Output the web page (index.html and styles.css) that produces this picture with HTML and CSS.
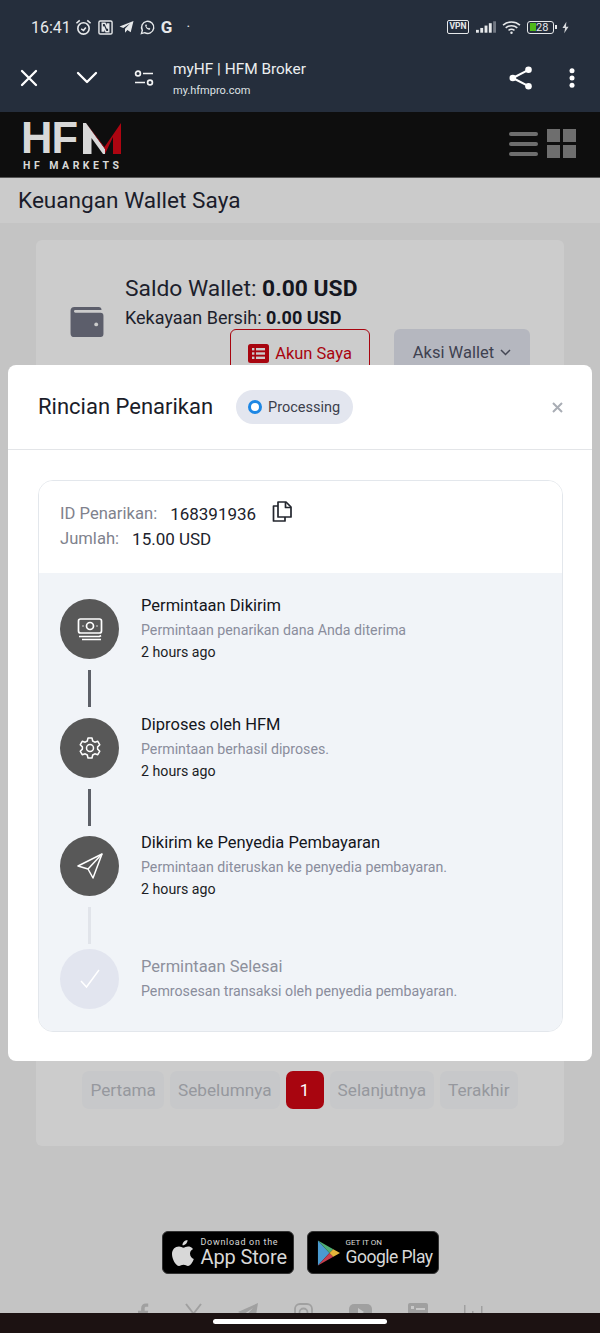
FILE: index.html
```html
<!DOCTYPE html>
<html lang="id">
<head>
<meta charset="utf-8">
<title>myHF | HFM Broker</title>
<link rel="stylesheet" href="styles.css">
</head>
<body>
<div class="phone">
  <header class="chrome">
    <div class="status">
      <div class="status-left">
        <span class="clock">16:41</span>
        <svg class="si" width="17" height="17" viewBox="0 0 18 18" fill="none" stroke="#e6e8ea" stroke-width="1.700"><circle cx="9" cy="10" r="6"/><path d="M6.500 10.500 9 12l2.500-3M1.500 4.500 5 1.500M16.500 4.500 13 1.500"/></svg>
        <svg class="si" width="15" height="15" viewBox="0 0 16 16" fill="none" stroke="#e6e8ea" stroke-width="1.500"><rect x="1" y="1" width="14" height="14" rx="1.500"/><path d="M4.500 12.500V3.500h3L10 9V3.500M11.500 3.500v9h-3L6 7v5.500"/></svg>
        <svg class="si" width="15" height="14" viewBox="0 0 15 14"><path d="M14.500 1 .5 6.500l3.800 1.500L11 3.500 6 8.700v4l2.400-2.700 3.300 2.300z" fill="#e6e8ea"/></svg>
        <svg class="si" width="15" height="15" viewBox="0 0 16 16" fill="none" stroke="#e6e8ea" stroke-width="1.500"><path d="M1.500 14.500l1-3.500a6.500 6.500 0 1 1 2.500 2.500z"/><path d="M5.500 5c0 3 2.500 5.500 5 5.500l.5-1.500-1.500-.8-.7.600c-1-.5-1.600-1.200-2-2l.6-.7L7 4.700z" fill="#e6e8ea" stroke="none"/></svg>
        <span class="gletter">G</span>
        <span class="dot-sep">·</span>
      </div>
      <div class="status-right">
        <span class="vpn">VPN</span>
        <svg width="20" height="14" viewBox="0 0 21 14"><g fill="#e6e8ea"><rect x="0" y="10" width="3" height="3"/><rect x="4.500" y="8" width="3" height="5"/><rect x="9" y="5.500" width="3" height="7.500"/><rect x="13.500" y="3" width="3" height="10"/></g><rect x="18" y="1" width="3" height="12" fill="#737984"/></svg>
        <svg width="19" height="15" viewBox="0 0 20 16" fill="none" stroke="#e6e8ea" stroke-width="1.700"><path d="M1 5.500c5-4.600 13-4.600 18 0M3.800 8.300c3.500-3 8.900-3 12.400 0M6.800 11c1.800-1.300 4.600-1.300 6.400 0"/><circle cx="10" cy="13.500" r="1.300" fill="#e6e8ea" stroke="none"/></svg>
        <span class="battery"><span class="battery-fill"></span><span class="battery-num">28</span></span>
        <svg width="7" height="13" viewBox="0 0 8 13"><path d="M5 0 .5 7H3.500L2.500 13 7.500 5.500H4.500z" fill="#d8dadd"/></svg>
      </div>
    </div>
    <div class="toolbar">
      <svg class="tb-close" width="18" height="18" viewBox="0 0 18 18" fill="none" stroke="#fff" stroke-width="2.300" stroke-linecap="round"><path d="M2 2l14 14M16 2 2 16"/></svg>
      <svg class="tb-chev" width="22" height="14" viewBox="0 0 22 14" fill="none" stroke="#fff" stroke-width="2.300" stroke-linecap="round" stroke-linejoin="round"><path d="M2 2l9 9 9-9"/></svg>
      <svg class="tb-tune" width="20" height="16" viewBox="0 0 20 16" fill="none" stroke="#f2f3f4" stroke-width="1.700"><circle cx="4" cy="3.500" r="2.400"/><path d="M9 3.500h10M1 12.500h10"/><circle cx="16" cy="12.500" r="2.400"/></svg>
      <div class="tb-title">
        <div class="tb-name">myHF | HFM Broker</div>
        <div class="tb-url">my.hfmpro.com</div>
      </div>
      <svg class="tb-share" width="24" height="24" viewBox="0 0 24 24" fill="#fff"><circle cx="19.500" cy="3.800" r="3.300"/><circle cx="19.500" cy="20.200" r="3.300"/><circle cx="3.800" cy="12" r="3.300"/><path d="M3.800 12 19.500 3.800M3.800 12l15.700 8.200" stroke="#fff" stroke-width="2" fill="none"/></svg>
      <svg class="tb-more" width="6" height="20" viewBox="0 0 6 20" fill="#fff"><circle cx="3" cy="2.800" r="2.500"/><circle cx="3" cy="10" r="2.500"/><circle cx="3" cy="17.200" r="2.500"/></svg>
    </div>
  </header>

  <div class="brandbar">
    <div class="logo">
      <div class="logo-mark">
        <span class="logo-hf">HF</span>
        <svg class="logo-m" width="38" height="31" viewBox="0 0 38 31"><path d="M0 0h3l19 26v5h-2L8.500 15v16H0z" fill="#d8d8d8"/><path d="M3 0l18.500 24L38 0v31h-8V14l-8 17v-5z" fill="#ae0511"/></svg>
      </div>
      <div class="logo-sub">HF MARKETS</div>
    </div>
    <div class="brand-icons">
      <div class="burger"><span></span><span></span><span></span></div>
      <div class="tiles"><span></span><span></span><span></span><span></span></div>
    </div>
  </div>

  <div class="titlebar">Keuangan Wallet Saya</div>

  <main class="content">
    <section class="card">
      <div class="wallet">
        <svg class="wallet-icon" width="34" height="30" viewBox="0 0 34 31"><path d="M4 0h25a3 3 0 0 1 3 3H5a1.500 1.500 0 0 0 0 3h26a3 3 0 0 1 3 3v19a3 3 0 0 1-3 3H4a4 4 0 0 1-4-4V4a4 4 0 0 1 4-4z" fill="#5c5e6b"/><circle cx="26.500" cy="18" r="2" fill="#ccc"/></svg>
        <div class="wallet-text">
          <div class="balance">Saldo Wallet: <b>0.00 USD</b></div>
          <div class="equity">Kekayaan Bersih: <b>0.00 USD</b></div>
        </div>
      </div>
      <div class="wallet-actions">
        <button class="btn-outline"><svg width="21" height="19" viewBox="0 0 21 19"><rect width="21" height="19" rx="2.500" fill="#a8050f"/><g fill="#ccc"><rect x="4" y="4" width="2.400" height="2.400"/><rect x="8" y="4" width="9" height="2.400"/><rect x="4" y="8.300" width="2.400" height="2.400"/><rect x="8" y="8.300" width="9" height="2.400"/><rect x="4" y="12.600" width="2.400" height="2.400"/><rect x="8" y="12.600" width="9" height="2.400"/></g></svg>Akun Saya</button>
        <button class="btn-grey">Aksi Wallet <svg width="11" height="7" viewBox="0 0 11 7" fill="none" stroke="#444754" stroke-width="1.500"><path d="M1 1l4.500 4.500L10 1"/></svg></button>
      </div>
      <nav class="pager">
        <span class="page">Pertama</span>
        <span class="page">Sebelumnya</span>
        <span class="page current">1</span>
        <span class="page">Selanjutnya</span>
        <span class="page">Terakhir</span>
      </nav>
    </section>

    <div class="stores">
      <div class="store">
        <svg width="22" height="26" viewBox="0 0 22 26" fill="#d8d8d8"><path d="M15.500 0c.2 2.800-2.300 5.500-5 5.300C10.200 2.700 12.800.2 15.500 0zM18 13.500c0-2.500 2-3.800 3-4.500-1.500-2-3.500-2.500-4.500-2.500-2-.2-3.800 1.200-5 1.200s-2.700-1.200-4.500-1.200C3 6.500 0 9.500 0 14c0 5 3.800 12 7 12 1.500 0 2.500-1.200 4.500-1.200S14.500 26 16 26c2.500 0 5-4.500 5.800-7-2-.8-3.800-2.700-3.800-5.500z"/></svg>
        <div class="store-text"><span class="store-small">Download on the</span><span class="store-big">App Store</span></div>
      </div>
      <div class="store store-gp">
        <svg width="23" height="26" viewBox="0 0 24 26"><path d="M1 0v26l12-13z" fill="#4b9bd0"/><path d="M1 0l12 13 4-4z" fill="#4fae74"/><path d="M1 26l12-13 4 4z" fill="#c83e4d"/><path d="M17 9l7 4-7 4-4-4z" fill="#e5b53a"/></svg>
        <div class="store-text"><span class="store-small gp">GET IT ON</span><span class="store-big gp">Google Play</span></div>
      </div>
    </div>

    <div class="socials">
      <svg width="11" height="20" viewBox="0 0 14 24" fill="#a0a0a0"><path d="M4 24V13H0V9h4V6c0-4 2.500-6 6-6h3v4h-2.500C9 4 8.500 4.800 8.500 6v3H13l-.7 4H8.500v11z"/></svg>
      <svg width="17" height="20" viewBox="0 0 17 20" fill="none" stroke="#a0a0a0" stroke-width="2"><path d="M1 1l14 18M16 1 2 19"/></svg>
      <svg width="20" height="20" viewBox="0 0 20 20" fill="#a0a0a0"><path d="M20 0 0 9l5.500 2.500L15 5l-7 7.500V19l4-4 5 3z"/></svg>
      <svg width="19" height="20" viewBox="0 0 19 20" fill="none" stroke="#a0a0a0" stroke-width="1.800"><rect x="1" y="1" width="17" height="17" rx="5"/><circle cx="9.500" cy="9.500" r="4"/></svg>
      <svg width="23" height="20" viewBox="0 0 23 20"><rect width="23" height="18" rx="5" fill="#a0a0a0" y="1"/><path d="M9 5l6 4-6 4z" fill="#c8c8c8"/></svg>
      <svg width="20" height="20" viewBox="0 0 20 20"><rect width="20" height="20" rx="2" fill="#a0a0a0"/><rect x="3" y="3" width="3" height="3" fill="#c8c8c8"/><rect x="8" y="5" width="9" height="2" fill="#c8c8c8"/></svg>
      <svg width="19" height="20" viewBox="0 0 19 20" fill="#a0a0a0"><rect x="0" y="2" width="1.500" height="18"/><rect x="8" y="8" width="1.500" height="12"/><rect x="17" y="3" width="1.500" height="17"/><rect x="0" y="18" width="19" height="1.500"/></svg>
    </div>
  </main>

  <div class="navbar"><span class="home-pill"></span></div>

  <section class="modal">
    <div class="modal-head">
      <h2 class="modal-title">Rincian Penarikan</h2>
      <span class="status-pill"><span class="ring"></span>Processing</span>
      <svg class="modal-x" width="11" height="11" viewBox="0 0 11 11" fill="none" stroke="#a9adb5" stroke-width="2"><path d="M1 1l9 9M10 1l-9 9"/></svg>
    </div>
    <div class="detail">
      <div class="detail-top">
        <div class="detail-row"><span class="lbl">ID Penarikan:</span><span class="val">168391936</span>
          <svg class="copy" width="20" height="21" viewBox="0 0 20 21" fill="none" stroke="#23262e" stroke-width="1.700" stroke-linejoin="round"><path d="M6 1h8l5 5v10H6z"/><path d="M13.500 1v5.500H19"/><path d="M6 5H1.500v15H13v-4"/></svg>
        </div>
        <div class="detail-row"><span class="lbl">Jumlah:</span><span class="val">15.00 USD</span></div>
      </div>
      <ol class="timeline">
        <li class="step">
          <div class="rail">
            <span class="bubble"><svg width="26" height="24" viewBox="0 0 26 24" fill="none" stroke="#fff" stroke-width="1.700"><rect x="1.500" y="2" width="23" height="14" rx="2"/><circle cx="13" cy="9" r="3.500"/><path d="M5.500 9h1M19.500 9h1M2 19.500h20.500l1.500-1M5 22.500h19"/></svg></span>
            <span class="link"></span>
          </div>
          <div class="step-text"><div class="step-title">Permintaan Dikirim</div><div class="step-desc">Permintaan penarikan dana Anda diterima</div><div class="step-time">2 hours ago</div></div>
        </li>
        <li class="step">
          <div class="rail">
            <span class="bubble"><svg width="24" height="24" viewBox="0 0 24 24" fill="none" stroke="#fff" stroke-width="1.500" stroke-linejoin="round"><path d="M10 2h4l.7 3 2.100 1.200 3-.9 2 3.500-2.200 2.100v2.200l2.200 2.100-2 3.500-3-.9-2.100 1.200-.7 3h-4l-.7-3-2.100-1.200-3 .9-2-3.500 2.200-2.100v-2.200L2.200 8.800l2-3.500 3 .9L9.300 5z"/><circle cx="12" cy="12" r="3.500"/></svg></span>
            <span class="link"></span>
          </div>
          <div class="step-text"><div class="step-title">Diproses oleh HFM</div><div class="step-desc">Permintaan berhasil diproses.</div><div class="step-time">2 hours ago</div></div>
        </li>
        <li class="step">
          <div class="rail">
            <span class="bubble"><svg width="26" height="26" viewBox="0 0 26 26" fill="none" stroke="#fff" stroke-width="1.500" stroke-linejoin="round"><path d="M25 1 1 13l10 3 5 9z"/><path d="M25 1 11 16"/></svg></span>
            <span class="link faded"></span>
          </div>
          <div class="step-text"><div class="step-title">Dikirim ke Penyedia Pembayaran</div><div class="step-desc">Permintaan diteruskan ke penyedia pembayaran.</div><div class="step-time">2 hours ago</div></div>
        </li>
        <li class="step last">
          <div class="rail">
            <span class="bubble pending"><svg width="20" height="20" viewBox="0 0 20 20" fill="none" stroke="#fff" stroke-width="1.500"><path d="M1 12l5.500 6L19 1"/></svg></span>
          </div>
          <div class="step-text"><div class="step-title muted">Permintaan Selesai</div><div class="step-desc">Pemrosesan transaksi oleh penyedia pembayaran.</div></div>
        </li>
      </ol>
    </div>
  </section>
</div>
</body>
</html>
```
FILE: styles.css
```css
* { box-sizing: border-box; }
html, body { margin: 0; padding: 0; }
body { font-family: Roboto, "Liberation Sans", sans-serif; background: #c4c4c4; }
.phone { position: relative; width: 600px; height: 1333px; overflow: hidden; background: #c4c4c4; display: flex; flex-direction: column; }

.chrome { height: 112px; background: #252e3c; color: #fff; flex: none; }
.status { height: 54px; display: flex; justify-content: space-between; align-items: center; padding: 0 31px; }
.status-left { display: flex; align-items: center; gap: 6px; }
.clock { font-size: 16px; color: #e8eaec; margin-right: -2px; }
.si { display: block; }
.gletter { font-size: 17px; font-weight: 700; color: #e6e8ea; }
.dot-sep { font-size: 14px; color: #e6e8ea; margin-left: 8px; }
.status-right { display: flex; align-items: center; gap: 6px; }
.vpn { width: 22px; height: 14px; border: 1.500px solid #e6e8ea; border-radius: 2px; font-size: 8.500px; font-weight: 700; line-height: 11px; text-align: center; color: #e6e8ea; margin-right: 1px; }
.battery { position: relative; width: 27px; height: 13px; border: 1.200px solid #e6e8ea; border-radius: 3px; display: block; margin-right: 2px; }
.battery::after { content: ""; position: absolute; right: -3.500px; top: 3px; width: 1.500px; height: 4.500px; background: #e6e8ea; }
.battery-fill { position: absolute; left: 1.500px; top: 1.500px; bottom: 1.500px; width: 6px; background: #4fb81a; }
.battery-num { position: absolute; left: 8px; top: -1px; font-size: 11px; line-height: 13px; color: #e6e8ea; }

.toolbar { position: relative; height: 58px; display: flex; align-items: center; padding-left: 20px; margin-top: -5px; }
.tb-close { margin-right: 37px; }
.tb-chev { margin-right: 37px; margin-left: 1px; }
.tb-tune { margin-right: 19px; margin-left: -1px; }
.tb-title { flex: 1; margin-top: 1px; }
.tb-name { font-size: 15.400px; line-height: 20px; color: #eceef0; }
.tb-url { font-size: 11px; line-height: 16px; margin-top: 4px; color: #dfe2e5; }
.tb-share { margin-right: 36px; }
.tb-more { margin-right: 25px; }

.brandbar { height: 66px; flex: none; background: #0e0e0e; border-bottom: 1px solid #555; display: flex; justify-content: space-between; align-items: center; padding: 8px 24px 0 23px; }
.logo { width: 100px; margin-top: -4px; }
.logo-mark { display: flex; align-items: flex-end; height: 32px; }
.logo-hf { display: block; width: 62px; margin-left: -2px; font-size: 44px; line-height: 32px; font-weight: 700; color: #d8d8d8; font-family: "Liberation Sans", sans-serif; letter-spacing: -1px; transform: scaleX(.99); transform-origin: left center; }
.logo-m { display: block; }
.logo-sub { font-size: 10.500px; font-weight: 700; letter-spacing: 3.500px; color: #d8d8d8; margin-top: 5px; white-space: nowrap; }
.brand-icons { display: flex; align-items: center; gap: 9px; margin-top: -10px; }
.burger { display: flex; flex-direction: column; gap: 6px; width: 29px; }
.burger span { height: 4px; border-radius: 2px; background: #6e6e6e; }
.tiles { display: grid; grid-template-columns: 13px 13px; grid-auto-rows: 13px; gap: 3px; }
.tiles span { background: #6e6e6e; }

.titlebar { height: 45px; flex: none; background: #cbcbcb; font-size: 22.600px; line-height: 45px; color: #1a1c2a; padding-left: 18px; }

.content { flex: 1; display: flex; flex-direction: column; align-items: center; padding-top: 17px; }
.card { width: 528px; height: 906px; background: #cccccc; border-radius: 6px; padding: 28px 34px 0 34px; flex: none; }
.wallet { display: flex; align-items: flex-start; }
.wallet-icon { margin: 39px 21px -10px 0; flex: none; }
.balance { font-size: 22.800px; line-height: 41px; color: #1d1f2c; }
.equity { font-size: 18px; line-height: 18px; color: #1d1f2c; }
.wallet b { font-weight: 700; color: #14161f; }
.wallet-actions { display: flex; justify-content: flex-end; gap: 24px; margin-top: 2px; }
.btn-outline, .btn-grey { font-family: Roboto, sans-serif; font-size: 16.500px; height: 50px; border-radius: 6px; display: flex; align-items: flex-start; justify-content: center; padding: 14px 0 0; }
.btn-outline { width: 140px; background: transparent; border: 1px solid #a8050f; color: #a8050f; gap: 6px; }
.btn-grey { width: 136px; background: #b5b7bf; border: 0; color: #3e4150; gap: 6px; }
.btn-grey svg { margin-top: 6px; }
.pager { display: flex; gap: 6px; justify-content: center; margin-top: 692px; }
.page { height: 38px; border-radius: 7px; background: #c7c8ca; color: #96989e; font-size: 17.200px; line-height: 38px; padding: 0 8px; white-space: nowrap; }
.page.current { width: 38px; flex: none; padding: 0; text-align: center; background: #a8050f; color: #fff; }

.stores { display: flex; gap: 13px; margin-top: 85px; flex: none; }
.store { width: 132px; height: 43px; background: #000; border: 1px solid #333; border-radius: 6px; display: flex; align-items: center; gap: 7px; padding-left: 9px; color: #d8d8d8; }
.store-gp { padding-left: 9px; gap: 6px; }
.store-text { display: flex; flex-direction: column; }
.store-small { font-size: 9px; line-height: 9px; letter-spacing: .7px; white-space: nowrap; }
.store-big { font-size: 20px; line-height: 20px; font-weight: 400; white-space: nowrap; letter-spacing: -.1px; }
.store-small.gp { font-size: 8px; letter-spacing: 0; }
.store-big.gp { font-size: 17.500px; letter-spacing: -.5px; }
.socials { display: flex; gap: 36px; align-items: flex-start; margin-top: 29px; margin-left: 20px; height: 24px; flex: none; }

.navbar { position: absolute; left: 0; right: 0; bottom: 0; height: 20px; background: #1c1212; display: flex; justify-content: center; align-items: flex-start; padding-top: 6px; }
.home-pill { width: 174px; height: 5px; border-radius: 3px; background: #fff; }

.modal { position: absolute; left: 8px; top: 365px; width: 584px; height: 696px; background: #fff; border-radius: 8px; }
.modal-head { height: 85px; border-bottom: 1px solid #e3e5e8; display: flex; align-items: flex-start; padding: 25px 29px 0 30px; }
.modal-title { margin: 0; font-size: 22px; line-height: 33px; font-weight: 400; color: #1b1d2a; white-space: nowrap; }
.status-pill { margin-left: 23px; height: 34px; border-radius: 17px; background: #e3e6ef; display: flex; align-items: center; padding: 0 13px 0 12px; font-size: 14.500px; color: #3c3f4c; gap: 6px; }
.ring { width: 14px; height: 14px; border: 3.500px solid #1d87e4; border-radius: 50%; background: #fff; }
.modal-x { margin-left: auto; margin-top: 12px; }

.detail { margin: 30px 29px 0 30px; height: 552px; border: 1px solid #e3e7ec; border-radius: 15px; overflow: hidden; }
.detail-top { height: 92px; background: #fff; padding: 20px 21px 0; }
.detail-row { display: flex; align-items: center; height: 25px; gap: 13px; }
.lbl { color: #7f828d; font-size: 16.600px; }
.val { color: #20222c; font-size: 17px; }
.copy { margin-left: 3px; margin-top: -5px; }
.timeline { list-style: none; margin: 0; padding: 26px 0 0 21px; height: 459px; background: #f1f4f8; }
.step { display: flex; height: 118.500px; }
.step.last { margin-top: -6px; }
.rail { width: 59px; display: flex; flex-direction: column; align-items: center; gap: 11px; flex: none; }
.bubble { width: 59px; height: 60px; border-radius: 50%; background: #585858; display: flex; align-items: center; justify-content: center; flex: none; }
.bubble.pending { background: #e2e5ef; }
.link { width: 3px; height: 37px; background: #5d6068; }
.link.faded { background: #e1e4ea; }
.step-text { margin-left: 22px; }
.step-title { font-size: 16.500px; line-height: 20px; margin-top: -3px; color: #14161c; }
.step-title.muted { color: #8d909c; }
.step-desc { font-size: 14.200px; line-height: 20px; margin-top: 4px; color: #8a8d9c; white-space: nowrap; }
.step-time { font-size: 14.200px; line-height: 20px; margin-top: 2px; color: #1b1d25; }
.step.last .step-title { margin-top: 8px; }
```
